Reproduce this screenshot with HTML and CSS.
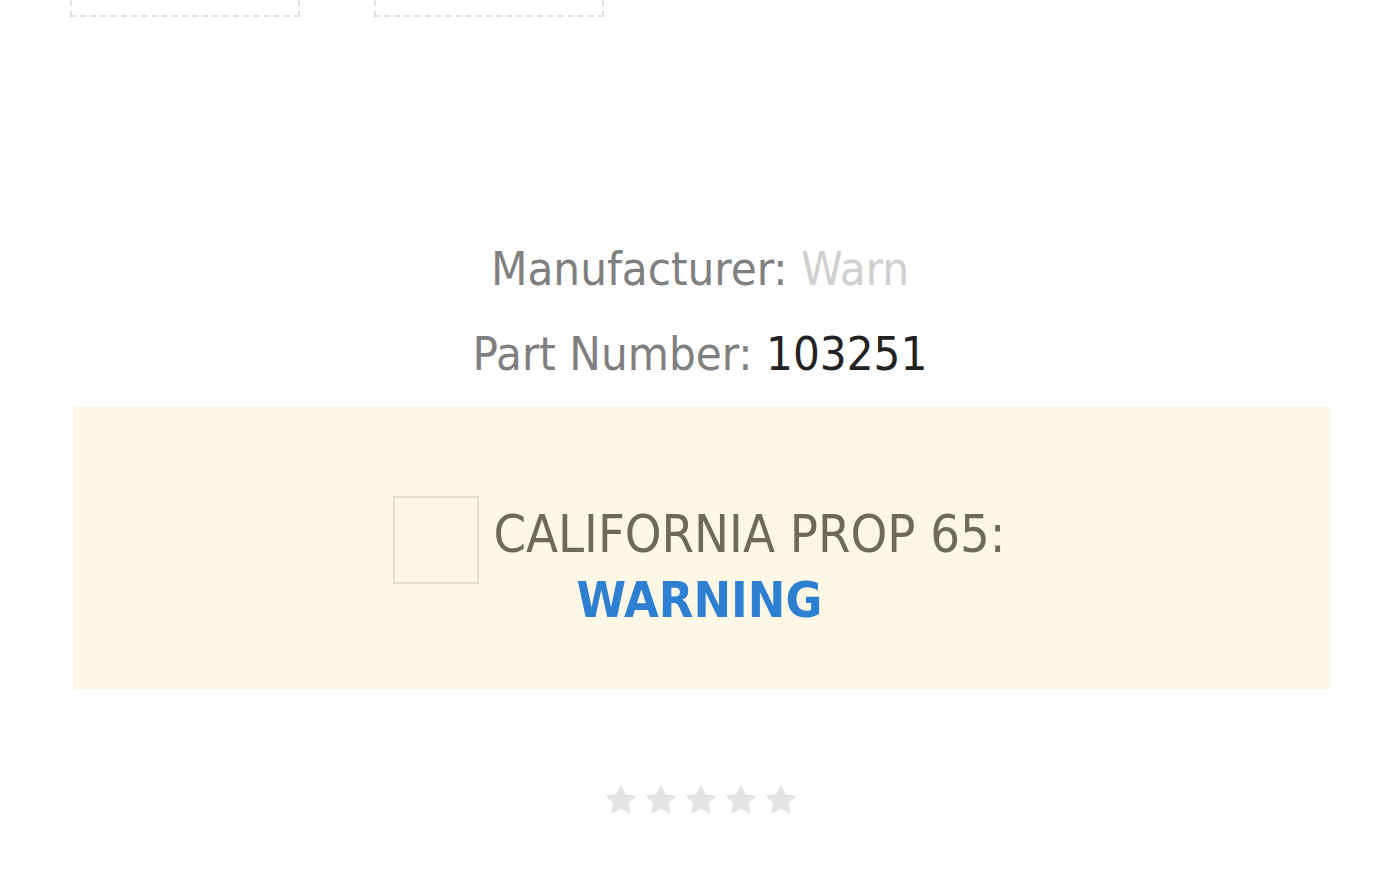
FILE: index.html
```html
<!DOCTYPE html>
<html lang="en">
<head>
    <meta charset="UTF-8">
    <meta name="viewport" content="width=device-width, initial-scale=1.0">
    <title>Warn 103251</title>
    <link rel="stylesheet" href="styles.css">
</head>
<body>
    <div class="page">
        <div class="thumbs">
            <div class="thumb"></div>
            <div class="thumb"></div>
        </div>

        <div class="details">
            <p class="detail">Manufacturer: <span class="brand">Warn</span></p>
            <p class="detail">Part Number: <span class="part">103251</span></p>
        </div>

        <div class="prop-box">
            <div class="prop-row">
                <div class="prop-icon"></div>
                <div class="prop-text">
                    <div class="prop-title">CALIFORNIA PROP 65:</div>
                    <div class="prop-warning">WARNING</div>
                </div>
            </div>
        </div>

        <div class="rating">
            <svg class="star" viewBox="0 0 24 24"><path d="M12 2.5l2.9 6.1 6.6.8-4.9 4.6 1.3 6.6L12 17.3l-5.9 3.3 1.3-6.6-4.9-4.6 6.6-.8z"/></svg>
            <svg class="star" viewBox="0 0 24 24"><path d="M12 2.5l2.9 6.1 6.6.8-4.9 4.6 1.3 6.6L12 17.3l-5.9 3.3 1.3-6.6-4.9-4.6 6.6-.8z"/></svg>
            <svg class="star" viewBox="0 0 24 24"><path d="M12 2.5l2.9 6.1 6.6.8-4.9 4.6 1.3 6.6L12 17.3l-5.9 3.3 1.3-6.6-4.9-4.6 6.6-.8z"/></svg>
            <svg class="star" viewBox="0 0 24 24"><path d="M12 2.5l2.9 6.1 6.6.8-4.9 4.6 1.3 6.6L12 17.3l-5.9 3.3 1.3-6.6-4.9-4.6 6.6-.8z"/></svg>
            <svg class="star" viewBox="0 0 24 24"><path d="M12 2.5l2.9 6.1 6.6.8-4.9 4.6 1.3 6.6L12 17.3l-5.9 3.3 1.3-6.6-4.9-4.6 6.6-.8z"/></svg>
        </div>
    </div>
</body>
</html>
```

FILE: styles.css
```css
* {
    box-sizing: border-box;
    margin: 0;
    padding: 0;
}

body {
    background-color: #ffffff;
    font-family: 'DejaVu Sans Condensed', 'Liberation Sans Narrow', 'Liberation Sans', sans-serif;
    font-stretch: condensed;
    color: #7a7a7a;
}

.page {
    width: 1400px;
    height: 875px;
    overflow: hidden;
}

/* product thumbnails, scrolled mostly out of view */
.thumbs {
    display: flex;
    gap: 74px;
    padding-left: 70px;
}

.thumb {
    width: 230px;
    height: 17px;
    border: 2px dashed #e2e2e2;
    border-top: none;
}

.details {
    margin-top: 227px;
    text-align: center;
}

.detail {
    font-size: 47px;
    line-height: 50px;
    margin-bottom: 35px;
    color: #7f7f7f;
}

.brand {
    color: #cfcfcf;
}

.part {
    color: #222222;
}

/* prop 65 notice */
.prop-box {
    margin: -7px 70px 0 73px;
    height: 282px;
    padding-top: 89px;
    background-color: #fdf7e6;
    display: flex;
    justify-content: center;
    align-items: flex-start;
}

.prop-row {
    display: flex;
    align-items: flex-start;
    gap: 14px;
    margin-left: -4px;
}

.prop-icon {
    width: 86px;
    height: 88px;
    border: 2px solid #e2ddcf;
}

.prop-text {
    padding-top: 5px;
    text-align: center;
}

.prop-title {
    font-size: 52px;
    line-height: 66px;
    color: #6e6b55;
}

.prop-warning {
    font-size: 50px;
    line-height: 66px;
    font-weight: bold;
    color: #2d7fd2;
    margin-right: 100px;
}

.rating {
    display: flex;
    justify-content: center;
    margin-top: 91px;
    padding-left: 2px;
}

.star {
    width: 40px;
    height: 40px;
    fill: #e4e4e4;
}
```
